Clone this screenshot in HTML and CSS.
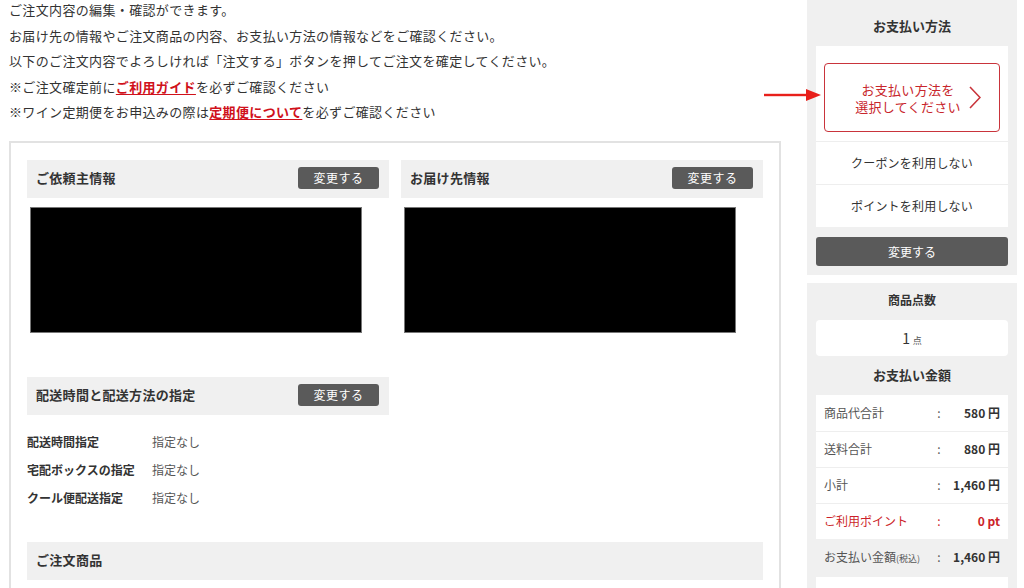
FILE: index.html
```html
<!DOCTYPE html>
<html lang="ja">
<head>
    <meta charset="UTF-8">
    <meta name="viewport" content="width=device-width, initial-scale=1.0">
    <title>ご注文内容の確認</title>
    <link rel="stylesheet" href="styles.css">
</head>
<body>

<div class="page">
    <main class="content">
        <div class="intro">
            <p>ご注文内容の編集・確認ができます。</p>
            <p>お届け先の情報やご注文商品の内容、お支払い方法の情報などをご確認ください。</p>
            <p>以下のご注文内容でよろしければ「注文する」ボタンを押してご注文を確定してください。</p>
            <p>※ご注文確定前に<a href="#" class="text-link">ご利用ガイド</a>を必ずご確認ください</p>
            <p>※ワイン定期便をお申込みの際は<a href="#" class="text-link">定期便について</a>を必ずご確認ください</p>
        </div>

        <div class="order-box">
            <div class="info-cols">
                <section class="info-block">
                    <div class="section-head">
                        <h3>ご依頼主情報</h3>
                        <button class="change-btn">変更する</button>
                    </div>
                    <div class="masked"></div>
                </section>
                <section class="info-block">
                    <div class="section-head">
                        <h3>お届け先情報</h3>
                        <button class="change-btn">変更する</button>
                    </div>
                    <div class="masked"></div>
                </section>
            </div>

            <section class="delivery">
                <div class="section-head">
                    <h3>配送時間と配送方法の指定</h3>
                    <button class="change-btn">変更する</button>
                </div>
                <dl class="delivery-list">
                    <div class="delivery-row">
                        <dt>配送時間指定</dt>
                        <dd>指定なし</dd>
                    </div>
                    <div class="delivery-row">
                        <dt>宅配ボックスの指定</dt>
                        <dd>指定なし</dd>
                    </div>
                    <div class="delivery-row">
                        <dt>クール便配送指定</dt>
                        <dd>指定なし</dd>
                    </div>
                </dl>
            </section>

            <section class="items">
                <div class="section-head">
                    <h3>ご注文商品</h3>
                </div>
            </section>
        </div>
    </main>

    <aside class="sidebar">
        <div class="panel">
            <h4 class="panel-title first">お支払い方法</h4>
            <div class="card">
                <div class="pay-select-wrap">
                    <a href="#" class="pay-select">
                        <span class="pay-select-text">お支払い方法を<br>選択してください</span>
                        <svg class="chevron" width="12" height="23" viewBox="0 0 12 23">
                            <polyline points="1,1 11,11.5 1,22" fill="none" stroke="#c9343b" stroke-width="1.6"/>
                        </svg>
                    </a>
                </div>
                <div class="option-row">クーポンを利用しない</div>
                <div class="option-row">ポイントを利用しない</div>
            </div>
            <button class="panel-btn">変更する</button>
        </div>

        <div class="panel">
            <h4 class="panel-title small">商品点数</h4>
            <div class="count-box"><span class="count-num">1</span> <span class="count-unit">点</span></div>
            <h4 class="panel-title total-title">お支払い金額</h4>
            <div class="card">
                <div class="sum-row">
                    <span class="sum-label">商品代合計</span>
                    <span class="sum-colon">:</span>
                    <span class="sum-value">580 円</span>
                </div>
                <div class="sum-row">
                    <span class="sum-label">送料合計</span>
                    <span class="sum-colon">:</span>
                    <span class="sum-value">880 円</span>
                </div>
                <div class="sum-row">
                    <span class="sum-label">小計</span>
                    <span class="sum-colon">:</span>
                    <span class="sum-value">1,460 円</span>
                </div>
                <div class="sum-row red">
                    <span class="sum-label">ご利用ポイント</span>
                    <span class="sum-colon">:</span>
                    <span class="sum-value">0 pt</span>
                </div>
            </div>
            <div class="sum-row grand">
                <span class="sum-label">お支払い金額<small>(税込)</small></span>
                <span class="sum-colon">:</span>
                <span class="sum-value">1,460 円</span>
            </div>
            <div class="card more"></div>
        </div>
    </aside>

    <svg class="pointer-arrow" width="58" height="14" viewBox="0 0 58 14">
        <rect x="0" y="5.8" width="46" height="2.4" fill="#e8201b"/>
        <polygon points="42,1 57,7 42,13" fill="#e8201b"/>
    </svg>
</div>

</body>
</html>
```

FILE: styles.css
```css
* {
    margin: 0;
    padding: 0;
    box-sizing: border-box;
}

body {
    font-family: "Noto Sans CJK JP", "Noto Sans", sans-serif;
    background-color: #ffffff;
    color: #333;
    font-size: 13px;
}

.page {
    position: relative;
    display: flex;
    gap: 26px;
    padding-left: 9px;
    height: 588px;
    overflow: hidden;
}

.content {
    width: 772px;
    flex-shrink: 0;
}

/* intro text */
.intro {
    margin-top: -3px;
    margin-bottom: 16px;
    line-height: 25.5px;
    letter-spacing: 0.35px;
    color: #333;
}

.text-link {
    color: #d0111b;
    font-weight: bold;
    text-decoration: underline;
    text-underline-offset: 2px;
}

/* main order box */
.order-box {
    border: 2px solid #e2e2e2;
    padding: 17px 16px 0;
    min-height: 460px;
}

.info-cols {
    display: flex;
    gap: 12px;
}

.info-block {
    width: 362px;
}

.section-head {
    display: flex;
    justify-content: space-between;
    align-items: center;
    height: 38px;
    padding: 0 10px 0 9px;
    background-color: #f0f0f0;
}

.section-head h3 {
    font-size: 13px;
    font-weight: bold;
    letter-spacing: 0.3px;
    color: #333;
    margin-bottom: 3px;
}

.change-btn {
    width: 81px;
    height: 22px;
    border: none;
    border-radius: 3px;
    background-color: #5a5a5a;
    color: #fff;
    font-family: inherit;
    font-size: 12px;
    letter-spacing: 0.5px;
    margin-bottom: 2px;
    cursor: pointer;
}

.masked {
    width: 332px;
    height: 126px;
    margin: 9px 0 0 3px;
    background-color: #000;
    border: 1px solid #777;
}

.delivery {
    width: 362px;
    margin-top: 44px;
}

.delivery-list {
    margin-top: 13px;
}

.delivery-row {
    display: flex;
    line-height: 28px;
    font-size: 12px;
}

.delivery-row dt {
    width: 125px;
    font-weight: bold;
    color: #333;
}

.delivery-row dd {
    color: #555;
}

.items {
    margin-top: 30px;
}

/* sidebar */
.sidebar {
    width: 210px;
    flex-shrink: 0;
    display: flex;
    flex-direction: column;
    gap: 8px;
}

.panel {
    background-color: #f0f0f0;
    padding-bottom: 9px;
}

.panel-title {
    text-align: center;
    font-size: 13px;
    font-weight: bold;
    color: #333;
    line-height: 34px;
}

.panel-title.first {
    padding-top: 7px;
    padding-bottom: 1px;
    line-height: 38px;
}

.panel-title.small {
    font-size: 12px;
}

.panel-title.total-title {
    line-height: 38px;
    padding-bottom: 1px;
}

.card {
    background-color: #fff;
    margin: 0 9px;
}

.pay-select-wrap {
    padding: 17px 8px 9px;
}

.pay-select {
    position: relative;
    display: flex;
    align-items: center;
    justify-content: center;
    height: 69px;
    padding-right: 8px;
    border: 1.5px solid #c9343b;
    border-radius: 4px;
    color: #c8262c;
    text-decoration: none;
    text-align: center;
    font-size: 13px;
    line-height: 17px;
    letter-spacing: 0.3px;
}

.chevron {
    position: absolute;
    right: 18px;
    top: 22px;
}

.option-row {
    height: 43px;
    line-height: 41px;
    border-top: 1px solid #eeeeee;
    text-align: center;
    font-size: 12px;
    color: #333;
    letter-spacing: 0.2px;
}

.panel-btn {
    display: block;
    width: 192px;
    height: 29px;
    margin: 10px 9px 0;
    border: none;
    border-radius: 3px;
    background-color: #5a5a5a;
    color: #fff;
    font-family: inherit;
    font-size: 12px;
    cursor: pointer;
}

.count-box {
    margin: 3px 9px 0;
    height: 36px;
    line-height: 36px;
    background-color: #fff;
    border-radius: 4px;
    text-align: center;
    color: #333;
}

.count-num {
    font-size: 14px;
}

.count-unit {
    font-size: 9px;
    color: #555;
}

.sum-row {
    display: grid;
    grid-template-columns: 105px 20px 1fr;
    align-items: center;
    height: 36px;
    padding: 0 8px 2px;
    border-top: 1px solid #eeeeee;
    font-size: 12px;
}

.sum-row:first-child {
    border-top: none;
}

.sum-label {
    color: #555;
    white-space: nowrap;
}

.sum-label small {
    font-size: 9px;
}

.sum-colon {
    text-align: center;
    color: #555;
}

.sum-value {
    text-align: right;
    font-weight: bold;
    color: #333;
    white-space: nowrap;
}

.sum-row.red .sum-label,
.sum-row.red .sum-colon,
.sum-row.red .sum-value {
    color: #cc1f2a;
}

.sum-row.grand {
    border-top: none;
    margin: 0 9px;
}

.card.more {
    margin-top: 2px;
    height: 40px;
}

/* red pointer arrow */
.pointer-arrow {
    position: absolute;
    left: 764px;
    top: 88px;
}
```
